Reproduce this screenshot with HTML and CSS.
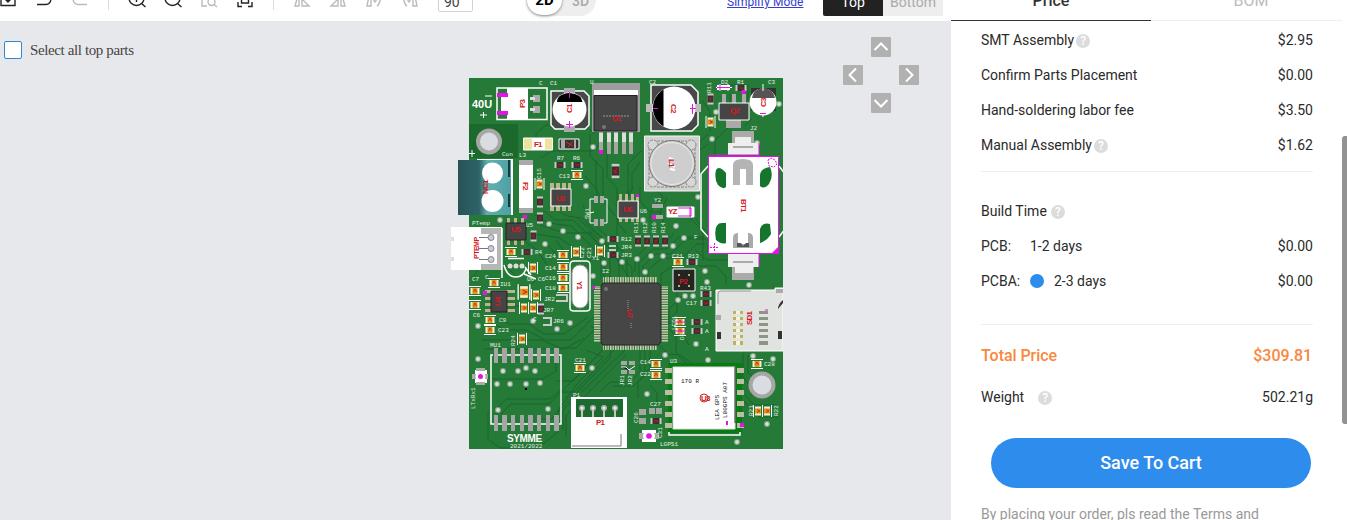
FILE: index.html
```html
<!DOCTYPE html>
<html lang="en">
<head>
<meta charset="utf-8">
<title>PCB Assembly Quote</title>
<link rel="stylesheet" href="styles.css">
</head>
<body>
<div class="app">
<main class="editor">
  <div class="toolbar">
    <div class="tools">
      <svg class="tool" viewBox="0 -12 16 24"><path d="M1 0V5.5H15V0M8-9V2M5-1l3 3 3-3"/></svg>
      <svg class="tool" viewBox="0 -12 16 24"><path d="M5-9L1-5l4 4M1-5h9a4.7 4.7 0 0 1 0 9.5H1"/></svg>
      <svg class="tool off" viewBox="0 -12 16 24"><path d="M11-9l4 4-4 4M15-5H6a4.7 4.7 0 0 0 0 9.5h9"/></svg>
    </div>
    <i class="divider"></i>
    <div class="tools">
      <svg class="tool" viewBox="0 -12 16 24"><circle cx="7.5" cy="-2" r="7.500"/><path d="M12.500 3.500l4 3.500M7.500-6V2M4-2h7"/></svg>
      <svg class="tool" viewBox="0 -12 16 24"><circle cx="7.500" cy="-2" r="7.500"/><path d="M12.500 3.500l4 3.500M4-2h7"/></svg>
      <svg class="tool off" viewBox="0 -12 16 24"><path d="M6 6H1V-8H14V-3"/><circle cx="10.500" cy="2" r="3.500"/><path d="M13 4.500l3 2.500"/></svg>
      <svg class="tool" viewBox="0 -12 16 24"><path d="M1 2v4.500h4M11 6.500h4V2M1-4v-4h4M11-8h4v4M4.500-5h7v8h-7z"/></svg>
    </div>
    <i class="divider"></i>
    <div class="tools mirror">
      <svg class="tool off" viewBox="0 -12 16 24"><path d="M1 6L5-8V6zM8-1V6h7z"/></svg>
      <svg class="tool off" viewBox="0 -12 16 24"><path d="M11 6V-8l4 14zM8-1V6H1z"/></svg>
      <svg class="tool off" viewBox="0 -12 16 24"><path d="M1 6L3-4h2V6zM7-6q8 0 7 7-1 4-3 5M7-1l2 3 2-3"/></svg>
      <svg class="tool off" viewBox="0 -12 16 24"><path d="M11 6V-4h2l2 10zM9-6Q1-6 2 1q1 4 3 5M9-1L7 2 5-1"/></svg>
    </div>
    <div class="angle">90</div>
    <div class="dimension"><b>2D</b><span>3D</span></div>
    <a class="simplify">Simplify Mode</a>
    <div class="sides"><span class="top">Top</span><span>Bottom</span></div>
  </div>
  <div class="canvas">
    <label class="select"><i></i><span>Select all top parts</span></label>
    <svg class="board" viewBox="451 78 332 371">
      <defs>
        <g id="via"><circle r="3" fill="#82a487"/><circle r="1.900" fill="#d8dedb"/></g>
        <g id="cap"><path d="M-6-4.500H6M-6 4.500H6" stroke="#fff"/><rect x="-4.500" y="-3" width="9" height="6" fill="#f3efcf"/><rect x="-2.500" y="-3" width="5" height="6" fill="#d99a18"/><path d="M-1.500 1L0-2 1.500 1" stroke="#e22" fill="none"/></g>
        <g id="res"><rect x="-5.500" y="-3" width="11" height="6" fill="#c9cbc9"/><rect x="-3.500" y="-3" width="7" height="6" fill="#343434"/><path d="M-2-1L2 1M-1 1.500L1.500-1" stroke="#c11"/></g>
        <g id="pin"><circle r="3" fill="#b2b2a8"/><circle r="1.500" fill="#e8e8ff"/><rect x="-1" y="2" width="2" height="7" fill="#c8c4b5"/></g>
        <pattern id="legv" width="2.500" height="4" patternUnits="userSpaceOnUse"><rect width="1.500" height="4" fill="#cfc9b0"/></pattern>
        <pattern id="legh" width="4" height="2.500" patternUnits="userSpaceOnUse"><rect width="4" height="1.500" fill="#cfc9b0"/></pattern>
        <linearGradient id="teal"><stop offset="0" stop-color="#285358"/><stop offset=".4" stop-color="#2d6468"/><stop offset=".55" stop-color="#62aeb0"/><stop offset="1" stop-color="#4ea1a3"/></linearGradient>
      </defs>
      <rect x="469" y="78" width="314" height="371" fill="#267a38"/>
      <path fill="#1b692c" d="M469 124h49v34h-49z"/>
      <!-- copper traces -->
      <g class="trace">
        <path d="M536 148v-14l10-9h40l8 9M570 127v-5M540 158l12-7h40l15-12M590 134v22l13 13v32l14 17v34M596 160v30l8 12M585 176l12 14v9M607 148v29l10 11v22M642 150l-14 14v34M640 162l-8 12v17"/>
        <path d="M535 215l14 8 22 3 33 33v19M543 210l12 10h18l37 35v23M550 206l17 10 15 2 37 36v24M583 205l6 14 38 37v22M588 230l44 37v11M540 225l24 8h26l11 15v30M530 233l30 5 30 22v20M577 218l26 21 26 38"/>
        <path d="M639 278v-15l14-14h14l12-12h25M643 278v-12l13-12h15l15-15h20M648 278v-8l14-12h20l15-14h8M635 272v-14l14-14h15l10-10M671 267l-10 7v14M690 258l9 8h17l10 11v8M695 250l12 10h20l6 8M686 292l-17 17v15M677 292v20l-10 9"/>
        <path d="M630 190l-12 13v20l8 10M633 187l-8 16v15M640 187v14l10 11h12M648 185l14 10v6M660 198l-10 14v9l10 9M667 198l-7 14 5 14M690 218l13 13v30M696 219l12 16v18M680 142h20l8-8M683 150h17l8-6"/>
        <path d="M495 318l14 6h20l15 10h20l24-17M489 322l17 8h20l20 10h25l23-23M482 340h60l18 8h16l25-25M484 349h80l20-11M590 326l17 10 7 14-40 42h-14M594 332l15 11-36 38h-17M586 350l17 7-26 27-25 35h-10"/>
        <path d="M488 411v28l12 9h38l20-16v-20l52-54v-8M497 420v-12l9-9h44l12-10M502 425v-12l9-9h38l70-70M563 430v-20l62-60M566 437v-22l61-61M485 376l8 3h50l13-8v-14"/>
        <path d="M640 350v22l-10 10h-20l-10 10M645 350v26l-12 10h-20M650 350v18l-12 14v16M656 342l12 12 12 1 20 14M664 320l15 7 10 18M666 327l10 8v18l10 10M743 353v24l9 11v8M748 355v18l8 6M745 395l9 10h23M744 401l15 16h20M650 385l7 8v8l-7 7"/>
        <path d="M484 143h-10v12M474 228l-5 14 8 12v18l-8 8M526 242l11 8 10 15M548 245l15 17v22M556 240l11 15M493 270l12-5 9 9M516 286h14l7-8M513 306h12l7 4M720 85h28v20M730 94v32l-15 14v18M702 100l8 12v20M752 118l-7 8"/>
      </g>
      <!-- free-standing vias -->
      <g>
        <use href="#via" x="593" y="147"/><use href="#via" x="586" y="186"/><use href="#via" x="545" y="244"/><use href="#via" x="578" y="237"/><use href="#via" x="563" y="231"/><use href="#via" x="549" y="224"/><use href="#via" x="602" y="241"/><use href="#via" x="604" y="263"/><use href="#via" x="593" y="276"/><use href="#via" x="712" y="139"/><use href="#via" x="716" y="112"/><use href="#via" x="779" y="104"/><use href="#via" x="643" y="220"/><use href="#via" x="676" y="226"/><use href="#via" x="684" y="238"/><use href="#via" x="673" y="246"/><use href="#via" x="663" y="256"/><use href="#via" x="651" y="256"/><use href="#via" x="637" y="259"/><use href="#via" x="622" y="262"/><use href="#via" x="645" y="272"/><use href="#via" x="705" y="271"/><use href="#via" x="707" y="282"/><use href="#via" x="749" y="285"/><use href="#via" x="678" y="300"/><use href="#via" x="685" y="296"/><use href="#via" x="693" y="296"/><use href="#via" x="557" y="329"/><use href="#via" x="570" y="323"/><use href="#via" x="533" y="321"/><use href="#via" x="478" y="326"/><use href="#via" x="478" y="359"/><use href="#via" x="503" y="371"/><use href="#via" x="518" y="371"/><use href="#via" x="526" y="368"/><use href="#via" x="535" y="371"/><use href="#via" x="497" y="384"/><use href="#via" x="510" y="384"/><use href="#via" x="526" y="384"/><use href="#via" x="540" y="383"/><use href="#via" x="498" y="410"/><use href="#via" x="548" y="409"/><use href="#via" x="592" y="368"/><use href="#via" x="696" y="344"/><use href="#via" x="708" y="360"/><use href="#via" x="665" y="355"/><use href="#via" x="647" y="394"/><use href="#via" x="737" y="442"/><use href="#via" x="767" y="424"/><use href="#via" x="753" y="356"/><use href="#via" x="773" y="359"/><use href="#via" x="500" y="220"/><use href="#via" x="698" y="197"/><use href="#via" x="757" y="143"/>
      </g>
      <g fill="#d9dce1" stroke="#a6a6a4" stroke-width="4"><circle cx="489" cy="141.500" r="11"/><circle cx="762" cy="385" r="11.500"/></g>
      <!-- P3 header -->
      <path d="M497 88h50v31.500h-50z" fill="none" stroke="#fff" stroke-width="1.500"/><path fill="#fff" d="M507 88h21v31h-21zM501 97h8v14h-8z"/><path fill="#e711e7" d="M497 93h11v4h-11zM497 111h11v4h-11z"/><path fill="#aaa" d="M533 95h7v7h-7zM533 106h7v7h-7z"/><path fill="#ddd" d="M530 97h5v3h-5zM530 108h5v3h-5z"/>
      <!-- C1 -->
      <path d="M551 91h33l5 5v29l-4 4h-30l-4-4z" fill="#484848" stroke="#fff" stroke-width="1.500"/><path fill="#aaa" d="M564 88h11v6h-11zM564 126h11v6h-11z"/><circle cx="569.500" cy="109.500" r="17" fill="#fff"/><path d="M557 102q0-8 12.500-9 12.500 1 13 9z"/><path d="M569.500 92v6M566 124.500h7M569.500 121v7" stroke="#e711e7"/>
      <!-- U1 regulator -->
      <path fill="#9d9d9d" d="M592 83h48v49h-48z"/><path fill="#fff" d="M594 90h44v5h-44z"/><path fill="#454545" stroke="#222" d="M594 95.500h43v35.500h-43z"/><path fill="#a7a7a1" d="M599 132h4v20h-4zM607 132h4v22h-4zM614 132h4v22h-4zM622 132h4v22h-4zM629 132h4v22h-4z"/><path fill="#ddd" d="M599 133h4v9h-4zM607 133h4v9h-4zM614 133h4v9h-4zM622 133h4v9h-4zM629 133h4v9h-4z"/><path fill="#e711e7" d="M599 150h4v4h-4z"/><path d="M603 116h26" stroke="#999" stroke-dasharray="2 1"/><circle cx="604" cy="127" r="2" fill="#777"/>
      <!-- C2 -->
      <path d="M651 85h40l7 7v33l-6 6h-41z" fill="#484848" stroke="#fff" stroke-width="1.500"/><path fill="#bbb" d="M646 104h8v8h-8zM694 104h7v8h-7z"/><circle cx="674" cy="108" r="21.500" fill="#fff"/><path d="M663.500 89.500v37a21.500 21.500 0 0 1 0-37z"/><path d="M653 108.500h5M690 108.500h6M692.500 104v10" stroke="#e711e7"/>
      <!-- inductor L1 -->
      <path fill="#d0d1d0" stroke="#f5f5f5" d="M644.500 136h55v55h-55z"/><g fill="#d7d7d7" stroke="#888" stroke-dasharray="3 1"><circle cx="653" cy="145" r="5"/><circle cx="691" cy="145" r="5"/><circle cx="653" cy="182" r="5"/><circle cx="691" cy="182" r="5"/><path fill="none" d="M649 148v31M695 148v31M657 141h30M657 187h30"/></g><circle cx="672" cy="163.500" r="23" fill="#cdcecd" stroke="#777"/><circle cx="672" cy="163.500" r="21" fill="none" stroke="#e9e9e9"/><path d="M669 158l5 2M668 163l7 4M670 169l5 1" stroke="#fff" stroke-width="2"/>
      <!-- Q2 and C3 -->
      <path fill="#aaa" d="M722 94h4v10h-4zM732 94h4v10h-4zM742 94h4v10h-4zM726 120h15v8h-15z"/><path fill="#454545" stroke="#fff" d="M719 103h30v17h-30z"/><path fill="#333" d="M751 88h25v23h-25z"/><circle cx="763" cy="102" r="13.500" fill="#fff"/><path fill="#555" d="M752 98q1-9 11-10 10 1 12 10z"/><path d="M763 84v7M763 112v5" stroke="#fff"/><path d="M760 113.500h6" stroke="#e711e7"/>
      <path fill="#fff" d="M717 85h13v5h-13z"/><path d="M716 87.500h16M720 84v7M728 84v7" stroke="#fff"/><path d="M717 87.500h13M720 85v5" stroke="#e711e7"/><use href="#res" x="741" y="88"/><circle cx="743.500" cy="92" r="2.300" fill="#e711e7"/><use href="#res" transform="translate(710.500 99) rotate(90)"/><use href="#cap" transform="translate(710.500 122) rotate(90)"/>
      <!-- coin cell holder -->
      <path d="M708 166l-7 8v55l7 8M779 166l6 8v55l-6 8" fill="none" stroke="#fff" stroke-width="1.500"/><path fill="#aaa" d="M732 131h22v12h-22zM732 267h22v13h-22z"/><path fill="#eee" d="M735 137h16v6h8v12h-31v-12h7zM728 254h31v13h-6v6h-18v-6h-7z"/><path fill="#fff" stroke="#e711e7" d="M708.500 156.500h70v97h-70z"/><path d="M709 155h51M759 143v12M759 254v13" stroke="#e711e7" fill="none"/><path fill="#15752d" d="M716 170q3-5 10 3v14q-3 3-8-2-4-6-2-15zM770 167q-9 1-10 8v11q4 4 9-2 5-8 1-17zM716 240q-3-17 6-17h4v20q-4 2-10-3zM770 224q-8-2-10 5v14q8-3 11-9z"/><path fill="#b4b4b4" d="M733 185v-20q0-6 10-6t10 6v20h-7v-16h-6v16z"/><path fill="#aaa" d="M733 248v-10q0-5 5-5v11h10v-11q5 0 5 5v10z"/><path fill="#555" d="M737 243h4l2 3 3-3h3v4h-12z"/><path fill="#e711e7" d="M778 253v-6l-6 6z"/><path d="M714.500 243v9M710 247.500h9M768 160l3-2 4 2 2 4-3 3-5-1z" fill="none" stroke="#e711e7" stroke-dasharray="2 1"/><path d="M733 147h20M733 262h20" stroke="#666"/>
      <!-- F1, D1 and small parts -->
      <path fill="#eee29e" stroke="#fff" d="M523.500 138h29v12h-29z"/><path fill="#fff" d="M532 138h13v12h-13z"/><path fill="#333" stroke="#fff" d="M559 139h20v10h-20z"/><path fill="#aaa" d="M561 139h4v10h-4zM574 139h2v10h-2z"/><path d="M566 142l7 4M573 141l-5 6" stroke="#e22"/>
      <use href="#res" x="560" y="165"/><use href="#res" x="577" y="165"/><use href="#cap" x="577" y="175"/><use href="#cap" transform="translate(539.500 184) rotate(90)"/><use href="#res" transform="translate(615.500 171) scale(1.300) rotate(90)"/><use href="#res" transform="translate(540 202) rotate(90)"/><use href="#res" transform="translate(540 218) rotate(90)"/>
      <!-- terminal block, fuse F2 -->
      <path fill="#fff" d="M477 159h36v56h-36z"/><path fill="url(#teal)" d="M458 160h53v55h-53z"/><path fill="#18383a" d="M508 160h2v17h-2zM508 194h2v13h-2z"/><circle cx="492.500" cy="173" r="10.500" fill="#fff"/><circle cx="492.500" cy="201" r="11" fill="#fff"/><path fill="#aaa" d="M519 160h14v8h-14zM519 203h14v10h-14z"/><path fill="#fff" d="M519 165h14v43h-14z"/><path fill="#e711e7" d="M523 215h4v4h-4z"/>
      <!-- SOIC parts -->
      <g fill="#bbb58f"><path d="M550 183h4v28h-4zM556 183h4v28h-4zM562 183h4v28h-4zM568 183h3v28h-3zM619 194h3v28h-3zM625 194h3v28h-3zM631 194h3v28h-3zM636 194h3v28h-3zM507 218h3v27h-3zM514 218h3v27h-3zM521 218h3v27h-3zM485 290h30v3h-30zM485 297h30v3h-30zM485 303h30v3h-30zM485 309h30v3h-30z"/></g><g fill="#454545"><path stroke="#fff" d="M551 189h20v17h-20zM618 201h20v17h-20z"/><path stroke="#222" d="M506 223h20v17h-20zM491 291h16v21h-16z"/></g><path fill="#e711e7" d="M636 194h3v3h-3zM483 291h4v4h-4z"/>
      <path d="M595 199h-5v24h4M602 199h5v24h-5M590 213l4-1" stroke="#fff" fill="none"/><path fill="#aaa" d="M594 196h4v7h-4zM600 196h4v7h-4zM594 219h4v7h-4zM600 219h4v7h-4z"/>
      <path fill="#aaa" d="M652 204h11v4h-11zM652 215h11v4h-11z"/><path fill="#e711e7" d="M652 215h4v4h-4z"/><path fill="#fff" stroke="#fff" d="M667 207h27v10h-27z"/><path d="M678 208h13v8h-13M690 207v10" stroke="#e711e7" fill="none"/>
      <!-- white temperature connector -->
      <path fill="#fff" d="M451 227h51v43h-51z"/><path fill="#b6b8b5" d="M481 228h20v6h-20zM481 264h20v6h-20zM497 234h4v30h-4z"/><path fill="#ddd" d="M451 237h3v4h-3zM451 257h3v4h-3z"/><path d="M479 237.500h11M479 248.500h11M479 259.500h11" stroke="#777"/><g fill="#c9c9df" stroke="#888"><circle cx="491" cy="237.500" r="3"/><circle cx="491" cy="248.500" r="3"/><circle cx="491" cy="259.500" r="3"/></g>
      <use href="#cap" x="511" y="252"/><use href="#res" x="527" y="252"/><use href="#res" transform="translate(533.500 236) rotate(90)"/><path d="M502 228v50M508 258.500h16M504 265q3 12 12 12 7 0 10-8M525 267l6 8M524 274l12 5" fill="none" stroke="#fff" stroke-width="1.500"/><g fill="#ddd"><circle cx="510" cy="266" r="2.500"/><circle cx="516" cy="266" r="2.500"/><circle cx="522" cy="266" r="2.500"/></g>
      <use href="#cap" transform="translate(533 268) rotate(90)"/><use href="#cap" x="563" y="255"/><use href="#cap" x="563" y="267"/><use href="#cap" x="563" y="278"/><use href="#cap" x="563" y="288"/><use href="#cap" transform="translate(576 252) rotate(90)"/><use href="#cap" transform="translate(600 251) rotate(90)"/><use href="#cap" x="494" y="283"/><use href="#cap" x="475" y="291"/><use href="#cap" x="475" y="305"/><use href="#cap" transform="translate(524 292) scale(1.300) rotate(90)"/><use href="#cap" transform="translate(536 295) rotate(90)"/><use href="#cap" transform="translate(524 308) rotate(90)"/><use href="#cap" transform="translate(533 308) rotate(90)"/><use href="#res" transform="translate(541 309) rotate(90)"/><use href="#cap" x="490" y="320"/><use href="#cap" x="490" y="330"/><use href="#cap" transform="translate(522 339) rotate(90)"/><use href="#cap" x="580" y="368"/>
      <g fill="none" stroke="#c6cbc5" stroke-width="2"><path d="M556 295h11v6h-11M543 318h8v7h-8M609 246h7M609 250h7"/></g><use href="#res" x="613" y="239"/><use href="#res" x="613" y="255"/>
      <path d="M570 265q0-4 4-4h12q4 0 4 4v43q0 3-4 3h-12q-4 0-4-3z" fill="none" stroke="#fff" stroke-width="1.500"/><rect x="572" y="265" width="16" height="43" rx="8" fill="#fff" stroke="#999"/>
      <use href="#res" transform="translate(638 241) rotate(90)"/><use href="#res" transform="translate(647 241) rotate(90)"/><use href="#res" transform="translate(656 241) rotate(90)"/><use href="#res" transform="translate(665 241) rotate(90)"/><use href="#cap" x="678" y="262"/><use href="#res" x="692" y="262"/>
      <!-- crystal oscillator and main controller -->
      <path fill="#242424" stroke="#fff" d="M673 269h22v22h-22z"/><g fill="#eee36a"><circle cx="679" cy="275" r="1"/><circle cx="689" cy="275" r="1"/><circle cx="679" cy="286" r="1"/><circle cx="689" cy="286" r="1"/></g>
      <path fill="url(#legv)" d="M603 277h54v6h-54zM603 344h54v6h-54z"/><path fill="url(#legh)" d="M594 286h7v56h-7zM661 286h7v56h-7z"/><path fill="#464646" stroke="#242424" d="M603 283h55l3 3v56l-3 3h-55l-2-2v-57z"/><circle cx="606" cy="289" r="2" fill="#777"/><path fill="#e711e7" d="M592 286h3v3h-3z"/><path d="M628 300v11M631 323v6" stroke="#999" stroke-dasharray="1 1"/>
      <use href="#res" x="706" y="294"/><use href="#res" x="706" y="303"/><use href="#cap" x="680" y="322"/><use href="#res" x="697" y="322"/><use href="#cap" x="680" y="331"/><use href="#res" x="697" y="331"/><path d="M675 322h11M675 331h11" stroke="#e711e7"/>
      <!-- SD card slot -->
      <path d="M716 290h59v-2h8v63h-67z" fill="#e1e3e1" stroke="#fff"/><path d="M718 304v-10q0-3 3-3h30" fill="none" stroke="#777" stroke-width=".7"/><path fill="#aaa" d="M776 289h7v4h-7zM715 315h6v5h-6z"/><path d="M778 309l5-6v-3q-5 4-5 9zM717 332h4v7h-4zM778 331h4v8h-4z" fill="#333"/><path fill="#bcb15e" d="M733 311h10v3h-10zM733 317h10v3h-10zM733 323h10v3h-10zM733 329h10v3h-10zM733 335h10v3h-10zM733 341h10v4h-10z"/><path fill="#f7f4d1" d="M736 311h4v3h-4zM736 317h4v3h-4zM736 323h4v3h-4zM736 329h4v3h-4zM736 335h4v3h-4zM736 341h4v4h-4z"/><path fill="#8c9588" d="M759 311h9v3h-9zM759 317h9v3h-9zM759 323h9v3h-9zM759 329h9v3h-9zM759 335h9v3h-9zM759 341h9v4h-9z"/><path d="M765 310h3" stroke="#e711e7"/>
      <!-- unpopulated module footprint -->
      <path fill="#a4a5a4" d="M494 348h4v15h-4zM502 348h5v15h-5zM511 348h4v15h-4zM520 348h4v15h-4zM528 348h5v15h-5zM537 348h4v15h-4zM546 348h4v15h-4zM554 348h5v15h-5zM494 415h4v16h-4zM502 415h5v16h-5zM511 415h4v16h-4zM520 415h4v16h-4zM528 415h5v16h-5zM537 415h4v16h-4zM546 415h4v16h-4zM554 415h5v16h-5z"/><path d="M493 355h-2v69h3M559 355h2v69h-2M498 355h4M507 355h4M515 355h5M524 355h4M533 355h4M541 355h5M550 355h4M498 424h4M507 424h4M515 424h5M524 424h4M533 424h4M541 424h5M550 424h4" fill="none" stroke="#fff" stroke-width="1.500"/><path d="M525 388h2v2h-2z"/>
      <g><path fill="#fff" d="M475 370h12v13h-12z"/><path fill="#aaa" d="M472 374h16v5h-16zM476 368h9v3h-9zM476 382h9v3h-9z"/><circle cx="480.500" cy="376.500" r="5" fill="#fff"/><circle cx="480.500" cy="376.500" r="2.500" fill="#e711e7"/></g>
      <!-- P1 connector -->
      <path fill="#fff" d="M571 397h56v51h-56z"/><path fill="#1b6a30" d="M576 399h47v18h-47z"/><use href="#pin" x="582" y="408"/><use href="#pin" x="593" y="408"/><use href="#pin" x="604" y="408"/><use href="#pin" x="615" y="408"/><path d="M572 446h49v-12" stroke="#777" fill="none"/>
      <!-- antenna and nearby pads -->
      <g fill="#a4a8a3"><path d="M621 361h6v4h-6zM629 361h6v4h-6zM621 370h6v4h-6zM629 370h6v4h-6zM639 409h7v6h-7zM649 408h6v6h-6zM656 408h6v6h-6zM639 418h7v6h-7z"/></g><path d="M621 367h5l3 3M635 366l-6 4" stroke="#fff"/><use href="#res" x="656" y="421"/><use href="#cap" x="656" y="364"/><use href="#cap" x="656" y="375"/><path fill="#fff" d="M642 430h14v12h-14z"/><path fill="#aaa" d="M639 433h20v6h-20z"/><circle cx="649" cy="436" r="6" fill="#fff"/><circle cx="649" cy="436" r="2.800" fill="#e711e7"/>
      <!-- radio module -->
      <path fill="#087b13" d="M668 363h74v70h-74z"/><g fill="#bdbda6"><path d="M665 368h7v5h-7zM665 379h7v5h-7zM665 390h7v5h-7zM665 401h7v5h-7zM665 412h7v5h-7zM665 423h7v5h-7zM737 368h7v5h-7zM737 379h7v5h-7zM737 390h7v5h-7zM737 401h7v5h-7zM737 412h7v5h-7zM737 423h7v5h-7z"/></g><path d="M669 432v3h71v-3" fill="none" stroke="#fff" stroke-width="1.500"/><path fill="#fff" stroke="#ddd" d="M673 367h62v62h-62z"/><path d="M735 367v56" stroke="#333"/><circle cx="704" cy="398" r="4" fill="none" stroke="#c62b17"/><path fill="#e711e7" d="M726 421h2v4h-2zM740 423h4v4h-4z"/>
      <use href="#cap" x="757" y="364"/><use href="#cap" transform="translate(758 411) rotate(90)"/><use href="#cap" transform="translate(767 411) rotate(90)"/>
      <!-- silkscreen text -->
      <g class="silk"><text x="472" y="108" class="volt">40U</text><path d="M485 96h7M480 115h7M483.500 112v6M469 153.500h6M472 150v7" stroke="#fff"/><text x="507" y="442" class="brand">SYMME</text><text x="510" y="448">2021/2022</text><text x="502" y="156">Con</text><text x="472" y="225">PTemp</text><text x="519" y="157">L3</text><text x="539" y="85">C</text><text x="550" y="85">C1</text><text x="590" y="84">U</text><text x="649" y="84">C2</text><text x="721" y="84">D2</text><text x="737" y="84">R1</text><text x="768" y="84">C3</text><text x="750" y="130">J2</text><text x="557" y="160">R7</text><text x="573" y="160">R6</text><text x="559" y="178">C13</text><text x="654" y="202">Y2</text><text x="640" y="213">U6</text><text x="526" y="227">U5</text><text x="535" y="254">R4</text><text x="545" y="258">C24</text><text x="545" y="270">C14</text><text x="545" y="280">C16</text><text x="545" y="290">C18</text><text x="621" y="241">R12</text><text x="621" y="249">JR4</text><text x="621" y="257">JR3</text><text x="672" y="258">C21</text><text x="688" y="258">R13</text><text x="700" y="290">R43</text><text x="686" y="305">C17</text><text x="500" y="286">IU1</text><text x="472" y="281">C7</text><text x="485" y="279">C</text><text x="527" y="281">U6 C6</text><text x="544" y="301">JR2</text><text x="543" y="312">JR7</text><text x="553" y="323">JR6</text><text x="473" y="317">C6</text><text x="499" y="322">C9</text><text x="498" y="332">C23</text><text x="490" y="347">MU1</text><text x="575" y="362">C21</text><text x="573" y="397">P1</text><text x="640" y="364">C14</text><text x="640" y="376">C22</text><text x="670" y="363">U3</text><text x="650" y="406">C27</text><text x="660" y="446">LGPS1</text><text x="764" y="366">C28</text><text x="602" y="273">I2</text><text x="592" y="260">Y1</text><text x="694" y="239">F</text><text x="705" y="324">A</text><text x="705" y="333">A</text><text x="705" y="351">A</text><text x="533" y="321">C</text>
        <text transform="translate(711 93) rotate(-90)">R11</text><text transform="translate(541 179) rotate(-90)">C15</text><text transform="translate(589 219) rotate(-90)">SW1</text><text transform="translate(638 233) rotate(-90)">R11</text><text transform="translate(647 233) rotate(-90)">R12</text><text transform="translate(656 233) rotate(-90)">R10</text><text transform="translate(665 233) rotate(-90)">R14</text><text transform="translate(475 409) rotate(-90)">LTxRx1</text><text transform="translate(584 258) rotate(-90)">C22</text><text transform="translate(591 258) rotate(-90)">C21</text><text transform="translate(624 386) rotate(-90)">JR1</text><text transform="translate(632 386) rotate(-90)">JR2</text><text transform="translate(638 423) rotate(-90)">C26</text><text transform="translate(662 438) rotate(-90)">C31</text><text transform="translate(753 416) rotate(-90)">R21</text><text transform="translate(778 416) rotate(-90)">R22</text><text transform="translate(515 346) rotate(-90)">R24</text><text transform="translate(684 340) rotate(-90)">D3</text><text transform="translate(676 330) rotate(-90)">LED1</text></g>
      <!-- part designators -->
      <g class="ref"><text transform="translate(525 108) rotate(-90)">P3</text><text transform="translate(572 113) rotate(-90)">C1</text><text x="612" y="121">U1</text><text transform="translate(671 104) rotate(90)">C2</text><text x="730" y="113">Q2</text><text transform="translate(766 107) rotate(-90)">C3</text><text transform="translate(669 159) rotate(90)">L1</text><text x="534" y="147">F1</text><text transform="translate(488 194) rotate(-90)">NC1</text><text transform="translate(523 182) rotate(90)">F2</text><text x="556" y="201">U2</text><text x="623" y="212">U6</text><text x="511" y="232">U5</text><text transform="translate(479 259) rotate(-90)" class="ptemp">PTEMP</text><text transform="translate(500 306) rotate(-90)">U4</text><text x="668" y="214">YZ</text><text transform="translate(741 199) rotate(90)">BT1</text><text transform="translate(577 281) rotate(90)">Y1</text><text x="679" y="284">P2</text><text transform="translate(627 309) rotate(90)">U7</text><text transform="translate(752 325) rotate(-90)">SD1</text><text x="596" y="425">P1</text><text x="701" y="401">U3</text></g>
      <g class="module"><text x="681" y="383">170 R</text><text transform="translate(719 420) rotate(-90)">LEA GPS</text><text transform="translate(727 418) rotate(-90)">L80GPS A07</text></g>
    </svg>
    <div class="pad">
      <button class="up"><svg viewBox="0 0 20 20"><path d="M3.500 13L10 6.500l6.500 6.500"/></svg></button>
      <button class="left"><svg viewBox="0 0 20 20"><path d="M13 3.500L6.500 10l6.500 6.500"/></svg></button>
      <button class="right"><svg viewBox="0 0 20 20"><path d="M7 3.500l6.500 6.500L7 16.500"/></svg></button>
      <button class="down"><svg viewBox="0 0 20 20"><path d="M3.500 7l6.500 6.500L16.500 7"/></svg></button>
    </div>
  </div>
</main>
<aside class="quote">
  <nav class="tabs"><span class="active">Price</span><span>BOM</span></nav>
  <div class="details">
    <div class="row"><span>SMT Assembly</span><i class="help">?</i><span class="amount">$2.95</span></div>
    <div class="row"><span>Confirm Parts Placement</span><span class="amount">$0.00</span></div>
    <div class="row"><span>Hand-soldering labor fee</span><span class="amount">$3.50</span></div>
    <div class="row"><span>Manual Assembly</span><i class="help">?</i><span class="amount">$1.62</span></div>
    <section class="build">
      <div class="row"><span>Build Time</span><i class="help">?</i></div>
      <div class="row"><span class="kind">PCB:</span><span>1-2 days</span><span class="amount">$0.00</span></div>
      <div class="row"><span class="kind">PCBA:</span><i class="dot"></i><span>2-3 days</span><span class="amount">$0.00</span></div>
    </section>
    <div class="row total"><span>Total Price</span><span class="amount">$309.81</span></div>
    <div class="row weight"><span>Weight</span><i class="help">?</i><span class="amount">502.21g</span></div>
    <button class="save">Save To Cart</button>
    <p class="terms">By placing your order, pls read the Terms and</p>
  </div>
  <i class="thumb"></i>
</aside>
</div>
</body>
</html>
```
FILE: styles.css
```css
* { box-sizing: border-box; }
body { margin: 0; overflow: hidden; font: 14px Roboto, sans-serif; color: #2a2a2a; }
button { border: 0; padding: 0; font-family: inherit; }
.app { display: flex; width: 1347px; height: 520px; overflow: hidden; background: #fff; }
.editor { width: 951px; display: flex; flex-direction: column; }
.toolbar { height: 42px; margin-top: -21px; flex: none; display: flex; align-items: center; }
.tools { display: flex; gap: 20px; }
.tool { width: 16px; height: 24px; fill: none; stroke: #222; stroke-width: 1.4; overflow: visible; }
.tool.off { stroke: #bbb; }
.divider { width: 1px; height: 19px; margin: 0 20px; background: #ddd; }
.angle { margin-left: 20px; width: 35px; height: 24px; line-height: 27px; padding-left: 5px; border: 1px solid #d2d2d2; border-radius: 2px; color: #444; }
.dimension { margin-left: 54px; width: 69px; height: 32px; border-radius: 16px; background: #eee; display: flex; align-items: center; color: #aaa; font-weight: 500; }
.dimension b { width: 35px; height: 30px; line-height: 31px; border-radius: 15px; background: #fff; box-shadow: 0 1px 3px #888; text-align: center; color: #000; font-size: 15px; }
.dimension span { margin-left: 10px; padding-top: 1px; }
.simplify { margin-left: 131px; width: 76px; color: #3540ce; text-decoration: underline; font-size: 12px; white-space: nowrap; line-height: 18px; padding-top: 4px; }
.sides { margin-left: 20px; display: flex; width: 120px; height: 31px; line-height: 34px; text-align: center; color: #aaa; background: #eee; }
.sides span { width: 60px; }
.sides .top { background: #222; color: #fff; border-radius: 2px 0 0 2px; }
.canvas { position: relative; flex: 1; background: #e7e8ec; padding-top: 57px; }
.select { position: absolute; left: 4px; top: 20px; display: flex; align-items: center; gap: 8px; height: 18px; font: 15px "Liberation Serif", serif; letter-spacing: -.38px; color: #444; }
.select i { width: 18px; height: 18px; border: 1px solid #3185d6; border-radius: 2px; background: #fff; }
.board { display: block; width: 332px; height: 371px; margin-left: 451px; }
.trace { fill: none; stroke: #165f2a; stroke-width: 1; opacity: .75; }
.silk { fill: #e8f0e8; font: 6px "Liberation Mono", monospace; }
.silk .volt { fill: #fff; font: bold 11px "Liberation Sans", sans-serif; }
.silk .brand { fill: #fff; font: bold 10px "Liberation Sans", sans-serif; letter-spacing: -.4px; }
.ref { fill: #d51821; font: bold 8px "Liberation Sans", sans-serif; letter-spacing: -.8px; }
.ref .ptemp { font-size: 7px; letter-spacing: -.5px; }
.module { fill: #111; font: 6px "Liberation Mono", monospace; }
.pad { position: absolute; left: 843px; top: 16px; display: grid; grid-template-columns: repeat(3, 20px); grid-template-rows: repeat(3, 20px); gap: 8px; }
.pad button { width: 20px; height: 20px; background: #b1b1b1; border-radius: 1px; }
.pad svg { display: block; fill: none; stroke: #fff; stroke-width: 2; }
.pad .up { grid-area: 1 / 2; }
.pad .left { grid-area: 2 / 1; }
.pad .right { grid-area: 2 / 3; }
.pad .down { grid-area: 3 / 2; }
.quote { position: relative; width: 396px; background: #fff; }
.tabs { display: flex; height: 43px; margin-top: -22px; width: 391px; font-size: 16px; line-height: 46px; text-align: center; color: #bbb; box-shadow: inset 0 -1px #eee; }
.tabs span { flex: none; width: 200px; }
.tabs .active { color: #333; font-weight: 500; border-bottom: 1px solid #333; }
.details { width: 332px; margin-left: 30px; padding-top: 1px; }
.row { display: flex; align-items: center; height: 35px; }
.amount { margin-left: auto; }
.help { width: 14px; height: 14px; margin: 2px 0 0 2px; border-radius: 50%; background: #dcdcdc; color: #fff; font-size: 12px; font-style: normal; font-weight: 500; line-height: 14px; text-align: center; }
.build { margin-top: 9px; border-top: 1px solid #eee; border-bottom: 1px solid #eee; padding: 21px 0 26px; }
.build .help { margin-left: 4px; }
.kind { width: 49px; }
.dot { width: 14px; height: 14px; margin: 1px 10px 0 0; border-radius: 50%; background: #2d8cec; }
.total { height: 40px; margin-top: 10px; font-size: 16px; font-weight: 500; color: #fa873d; letter-spacing: -.05px; }
.total .amount { margin-right: 1px; }
.weight { height: 43px; }
.weight .help { margin-left: 14px; }
.save { display: block; width: 320px; height: 50px; margin: 20px 0 0 10px; border-radius: 25px; background: #2d8cec; color: #fff; font-size: 18px; line-height: 48px; font-weight: 500; }
.terms { margin: 17px 0 0; color: #999; white-space: nowrap; line-height: 18px; }
.thumb { position: absolute; top: 136px; right: 0; width: 5px; height: 288px; background: #929292; border-radius: 3px 0 0 3px; }
```
